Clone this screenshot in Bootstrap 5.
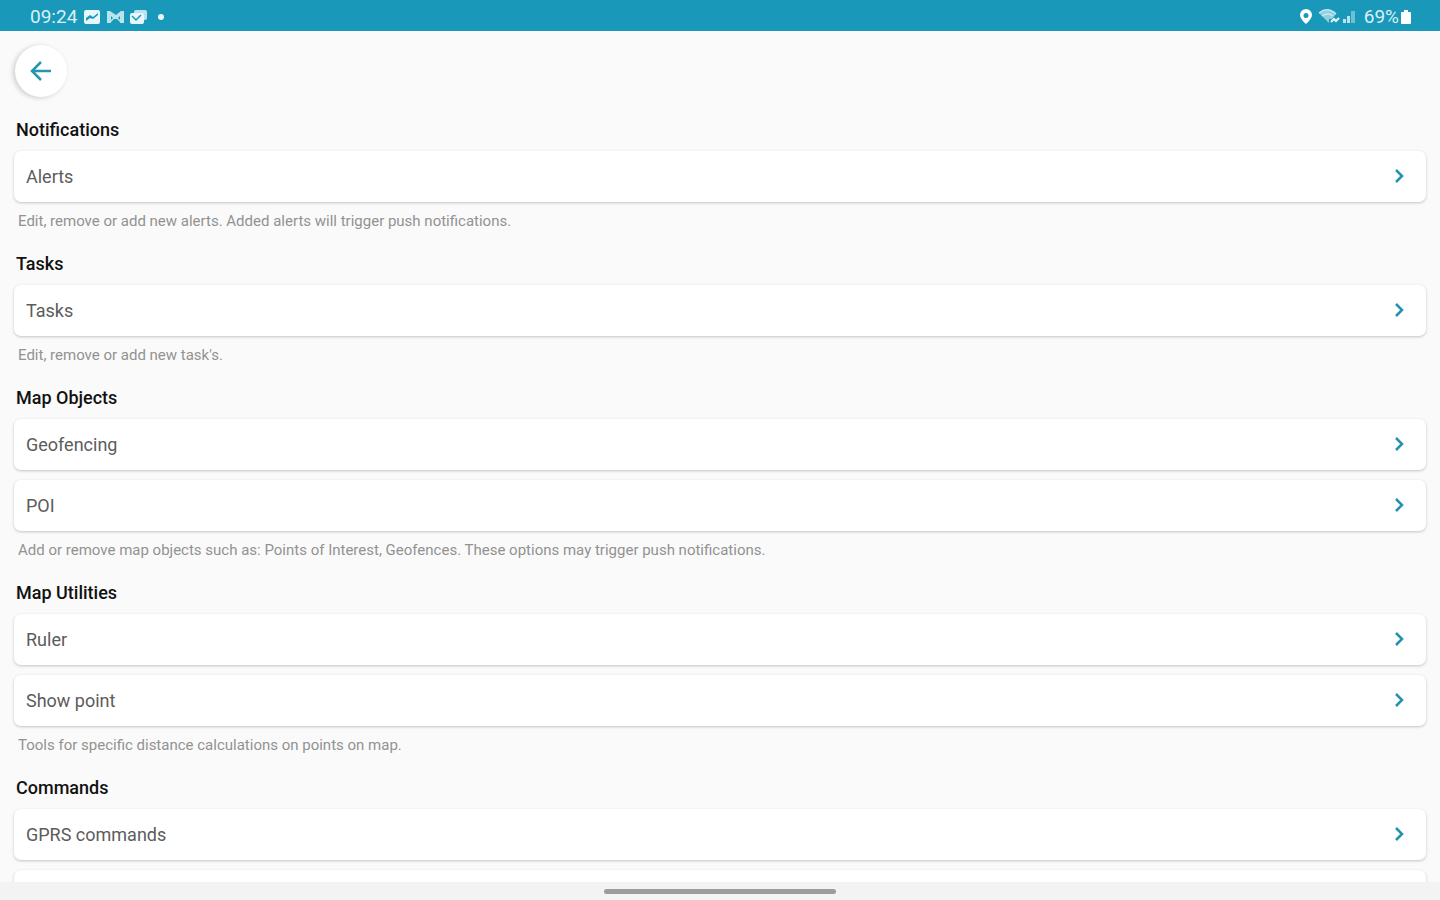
<!DOCTYPE html>
<html lang="en">
<head>
<meta charset="utf-8">
<meta name="viewport" content="width=device-width, initial-scale=1">
<title>Tools</title>
<link href="https://cdn.jsdelivr.net/npm/bootstrap@5.3.0/dist/css/bootstrap.min.css" rel="stylesheet">
<style>
  body { font-family: Roboto, sans-serif; background: #fafafa; color: #111; }
  .status-bar { background: #1a98ba; color: #d9f0f6; height: 31px; padding: 2px 28px 0 30px; font-size: 19px; line-height: 28px; }
  .status-bar svg { display: block; }
  .status-icons { margin-left: 7px; }
  .tool-list { padding: 14px 14px 0; scrollbar-width: none; }
  .tool-list::-webkit-scrollbar { display: none; }
  .back-btn { width: 52px; height: 52px; background: #fff; box-shadow: -2px 1px 5px rgba(0,0,0,.18); margin: 0 0 21px 1px; }
  .tool-group { margin-bottom: 22px; }
  .group-title { font-size: 18px; line-height: 24px; font-weight: 500; margin: 0 2px 9px; }
  .tool-rows { gap: 10px; }
  .tool-row { height: 51px; padding: 0 20px 0 12px; background: #fff; color: #5c5c5c; border-radius: 7px; font-size: 18px; line-height: 24px; box-shadow: 0 1px 3px rgba(0,0,0,.22); }
  .group-note { font-size: 15px; line-height: 18px; color: #929292; margin: 10px 4px 0; }
  .gesture-bar { height: 18px; background: #f3f3f3; }
  .gesture-handle { width: 232px; height: 5px; background: #9c9c9c; }
</style>
</head>
<body>
<div class="vh-100 d-flex flex-column overflow-hidden">
  <header class="status-bar d-flex justify-content-between align-items-center flex-shrink-0">
    <div class="d-flex align-items-center">
      <span>09:24</span>
      <svg class="status-icons" width="82" height="16" viewBox="0 0 82 16" fill="none" aria-hidden="true">
        <rect x="0" y="1" width="16" height="14" rx="2" fill="#e6f6fa"/>
        <path d="M2 12V9l4-3 3 2 5-4v2l-5 4-3-1z" fill="#1a98ba"/>
        <path d="M23 2v12h4V7l3 3h3l3-3v7h4V2h-3l-5 4-6-4z" fill="#b9e3ed"/>
        <path d="M26 13l4-4h3l4 4" stroke="#b9e3ed" stroke-width="1.5"/>
        <rect x="50" y="1" width="13" height="10" rx="2" fill="#b9e3ed"/>
        <rect x="46" y="4" width="14" height="11" rx="2" fill="#e6f6fa"/>
        <path d="M48 7l4 4 5-5" stroke="#1a98ba" stroke-width="1.5"/>
        <circle cx="77" cy="8" r="3" fill="#e6f6fa"/>
      </svg>
    </div>
    <div class="d-flex align-items-center">
      <svg class="me-2" width="56" height="18" viewBox="0 0 56 18" fill="none" aria-hidden="true">
        <path fill-rule="evenodd" d="M6 1a6 6 0 0 0-6 6c0 4 6 9 6 9s6-5 6-9a6 6 0 0 0-6-6zm0 4a2 2 0 1 1 0 5 2 2 0 0 1 0-5z" fill="#fff"/>
        <path d="M19 5q9-7 17 1l-4 5h-3v4z" fill="#8fd0e0"/>
        <path d="M19 5q9-7 17 1M22 8q6-4 11 0" stroke="#c4e8f0" stroke-width="1.5"/>
        <path d="M31 14l3-3 2 2 3-3" stroke="#e6f6fa" stroke-width="2"/>
        <path d="M43 15v-4h3v4zM47 15V8h3v7z" fill="#b9e3ed"/>
        <path d="M51 15V3h4v12z" fill="#6dbfd4"/>
      </svg>
      <span>69%</span>
      <svg width="13" height="16" viewBox="0 0 13 16" aria-hidden="true"><path d="M5 1h4v2h2q1 0 1 1v10q0 1-1 1H3q-1 0-1-1V4q0-1 1-1h2z" fill="#fff"/></svg>
    </div>
  </header>

  <main class="tool-list flex-grow-1 overflow-auto">
    <button type="button" class="back-btn btn rounded-circle border-0 p-0 d-flex align-items-center justify-content-center" aria-label="Back">
      <svg width="22" height="22" viewBox="0 0 22 22" fill="none" stroke="#2795b0" stroke-width="2.5" aria-hidden="true"><path d="M21 11H3M11 2l-9 9 9 9"/></svg>
    </button>

    <section class="tool-group">
      <h2 class="group-title">Notifications</h2>
      <div class="tool-rows d-flex flex-column">
        <a href="#" class="tool-row d-flex align-items-center justify-content-between text-decoration-none">Alerts<svg width="12" height="16" viewBox="0 0 12 16" fill="none" stroke="#2193ae" stroke-width="2.5" aria-hidden="true"><path d="M2 1l6 6-6 6"/></svg></a>
      </div>
      <p class="group-note">Edit, remove or add new alerts. Added alerts will trigger push notifications.</p>
    </section>

    <section class="tool-group">
      <h2 class="group-title">Tasks</h2>
      <div class="tool-rows d-flex flex-column">
        <a href="#" class="tool-row d-flex align-items-center justify-content-between text-decoration-none">Tasks<svg width="12" height="16" viewBox="0 0 12 16" fill="none" stroke="#2193ae" stroke-width="2.5" aria-hidden="true"><path d="M2 1l6 6-6 6"/></svg></a>
      </div>
      <p class="group-note">Edit, remove or add new task's.</p>
    </section>

    <section class="tool-group">
      <h2 class="group-title">Map Objects</h2>
      <div class="tool-rows d-flex flex-column">
        <a href="#" class="tool-row d-flex align-items-center justify-content-between text-decoration-none">Geofencing<svg width="12" height="16" viewBox="0 0 12 16" fill="none" stroke="#2193ae" stroke-width="2.5" aria-hidden="true"><path d="M2 1l6 6-6 6"/></svg></a>
        <a href="#" class="tool-row d-flex align-items-center justify-content-between text-decoration-none">POI<svg width="12" height="16" viewBox="0 0 12 16" fill="none" stroke="#2193ae" stroke-width="2.5" aria-hidden="true"><path d="M2 1l6 6-6 6"/></svg></a>
      </div>
      <p class="group-note">Add or remove map objects such as: Points of Interest, Geofences. These options may trigger push notifications.</p>
    </section>

    <section class="tool-group">
      <h2 class="group-title">Map Utilities</h2>
      <div class="tool-rows d-flex flex-column">
        <a href="#" class="tool-row d-flex align-items-center justify-content-between text-decoration-none">Ruler<svg width="12" height="16" viewBox="0 0 12 16" fill="none" stroke="#2193ae" stroke-width="2.5" aria-hidden="true"><path d="M2 1l6 6-6 6"/></svg></a>
        <a href="#" class="tool-row d-flex align-items-center justify-content-between text-decoration-none">Show point<svg width="12" height="16" viewBox="0 0 12 16" fill="none" stroke="#2193ae" stroke-width="2.5" aria-hidden="true"><path d="M2 1l6 6-6 6"/></svg></a>
      </div>
      <p class="group-note">Tools for specific distance calculations on points on map.</p>
    </section>

    <section class="tool-group">
      <h2 class="group-title">Commands</h2>
      <div class="tool-rows d-flex flex-column">
        <a href="#" class="tool-row d-flex align-items-center justify-content-between text-decoration-none">GPRS commands<svg width="12" height="16" viewBox="0 0 12 16" fill="none" stroke="#2193ae" stroke-width="2.5" aria-hidden="true"><path d="M2 1l6 6-6 6"/></svg></a>
        <div class="tool-row flex-shrink-0"></div>
      </div>
    </section>
  </main>

  <footer class="gesture-bar d-flex align-items-center justify-content-center flex-shrink-0">
    <div class="gesture-handle rounded-pill"></div>
  </footer>
</div>
<script src="https://cdn.jsdelivr.net/npm/bootstrap@5.3.0/dist/js/bootstrap.bundle.min.js"></script>
</body>
</html>
